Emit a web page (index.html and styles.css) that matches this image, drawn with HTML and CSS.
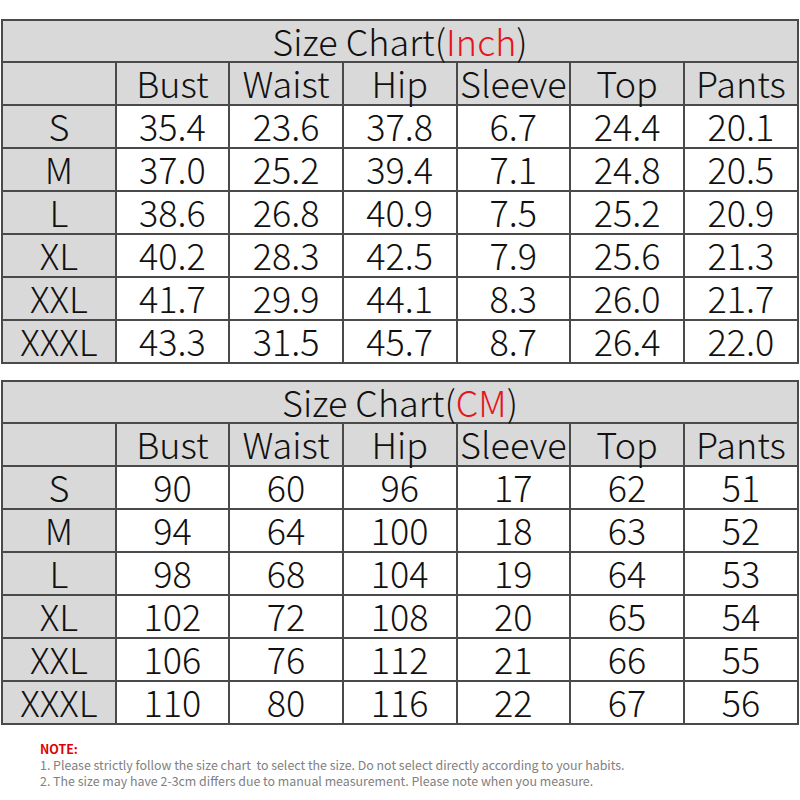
FILE: index.html
```html
<!DOCTYPE html>
<html>
<head>
<meta charset="utf-8">
<link rel="stylesheet" href="styles.css">
</head>
<body>
<div class="page">
  <table class="chart">
    <tr class="title-row"><td colspan="7">Size Chart(<span class="red">Inch</span>)</td></tr>
    <tr class="head-row"><td></td><td>Bust</td><td>Waist</td><td>Hip</td><td>Sleeve</td><td>Top</td><td>Pants</td></tr>
    <tr><td class="size">S</td><td>35.4</td><td>23.6</td><td>37.8</td><td>6.7</td><td>24.4</td><td>20.1</td></tr>
    <tr><td class="size">M</td><td>37.0</td><td>25.2</td><td>39.4</td><td>7.1</td><td>24.8</td><td>20.5</td></tr>
    <tr><td class="size">L</td><td>38.6</td><td>26.8</td><td>40.9</td><td>7.5</td><td>25.2</td><td>20.9</td></tr>
    <tr><td class="size">XL</td><td>40.2</td><td>28.3</td><td>42.5</td><td>7.9</td><td>25.6</td><td>21.3</td></tr>
    <tr><td class="size">XXL</td><td>41.7</td><td>29.9</td><td>44.1</td><td>8.3</td><td>26.0</td><td>21.7</td></tr>
    <tr><td class="size">XXXL</td><td>43.3</td><td>31.5</td><td>45.7</td><td>8.7</td><td>26.4</td><td>22.0</td></tr>
  </table>
  <table class="chart">
    <tr class="title-row"><td colspan="7">Size Chart(<span class="red">CM</span>)</td></tr>
    <tr class="head-row"><td></td><td>Bust</td><td>Waist</td><td>Hip</td><td>Sleeve</td><td>Top</td><td>Pants</td></tr>
    <tr><td class="size">S</td><td>90</td><td>60</td><td>96</td><td>17</td><td>62</td><td>51</td></tr>
    <tr><td class="size">M</td><td>94</td><td>64</td><td>100</td><td>18</td><td>63</td><td>52</td></tr>
    <tr><td class="size">L</td><td>98</td><td>68</td><td>104</td><td>19</td><td>64</td><td>53</td></tr>
    <tr><td class="size">XL</td><td>102</td><td>72</td><td>108</td><td>20</td><td>65</td><td>54</td></tr>
    <tr><td class="size">XXL</td><td>106</td><td>76</td><td>112</td><td>21</td><td>66</td><td>55</td></tr>
    <tr><td class="size">XXXL</td><td>110</td><td>80</td><td>116</td><td>22</td><td>67</td><td>56</td></tr>
  </table>
  <div class="note">
    <div class="note-title">NOTE:</div>
    <div>1. Please strictly follow the size chart&nbsp; to select the size. Do not select directly according to your habits.</div>
    <div>2. The size may have 2-3cm differs due to manual measurement. Please note when you measure.</div>
  </div>
</div>
</body>
</html>
```

FILE: styles.css
```css
html, body {
  margin: 0;
  padding: 0;
  background: #fff;
}
.page {
  width: 800px;
  height: 800px;
  padding: 19px 0 0 1px;
  box-sizing: border-box;
  font-family: "Noto Sans CJK SC", "Noto Sans", sans-serif;
}
.chart {
  border-collapse: collapse;
  table-layout: fixed;
  width: 798px;
  margin-bottom: 16px;
  border: 2px solid #666;
}
.chart td {
  border: 2px solid #4a4a4a;
  width: 114px;
  height: 38px;
  padding: 0 0 3px;
  text-align: center;
  vertical-align: middle;
  font-size: 36px;
  font-weight: 300;
  color: #111;
  line-height: 36px;
  white-space: nowrap;
  background: #fff;
}
.chart .title-row td,
.chart .head-row td,
.chart td.size {
  background: #d9d9d9;
}
.chart .title-row td {
  height: 37px;
}
.red {
  color: #e8141c;
}
.note {
  padding-left: 39px;
  margin-top: 14px;
  font-size: 12.4px;
  line-height: 16px;
  color: #808080;
}
.note-title {
  color: #e00000;
  font-weight: 700;
}
```
